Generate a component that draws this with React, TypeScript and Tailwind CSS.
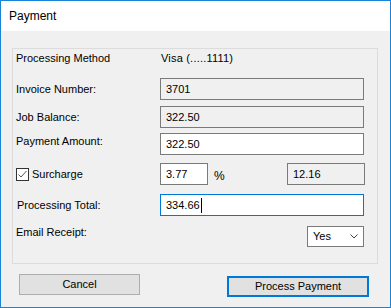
import { useState } from 'react';

const font = { fontFamily: '"Liberation Sans", Arial, sans-serif' };

function Box({ value, w, editable, focused }: { value: string; w: string; editable?: boolean; focused?: boolean }) {
  const border = focused ? 'border-[#0078d7]' : 'border-[#7a7a7a]';
  const bg = editable || focused ? 'bg-white' : 'bg-[#f0f0f0]';
  return (
    <div className={`${w} h-[22px] border ${border} ${bg} flex items-center pl-[5px] text-black`}>
      <span>{value}</span>
      {focused && <span className="w-px h-[15px] bg-black ml-[1px]" />}
    </div>
  );
}

export default function App() {
  const [surcharge, setSurcharge] = useState(true);

  return (
    <div
      className="w-[391px] h-[308px] border border-[#1883d7] bg-[#f0f0f0] flex flex-col text-[11px] text-black"
      style={font}
    >
      <div className="h-[30px] bg-white flex items-center pl-[8px] text-[12px] shrink-0">Payment</div>

      <div className="ml-[11px] mt-[17px] w-[366px] h-[216px] border border-[#dcdcdc] flex flex-col pl-[3px]">
        <div className="h-[18px] flex items-center">
          <span className="w-[144px]">Processing Method</span>
          <span className="pl-[1px] tracking-[0.2px]">Visa (.....1111)</span>
        </div>

        <div className="mt-[11px] h-[22px] flex items-center">
          <span className="w-[144px]">Invoice Number:</span>
          <Box value="3701" w="w-[204px]" />
        </div>

        <div className="mt-[6px] h-[22px] flex items-center">
          <span className="w-[144px]">Job Balance:</span>
          <Box value="322.50" w="w-[204px]" />
        </div>

        <div className="mt-[5px] h-[22px] flex items-start">
          <span className="w-[144px] leading-[13px] mt-[2px]">Payment Amount:</span>
          <Box value="322.50" w="w-[204px]" editable />
        </div>

        <div className="mt-[8px] h-[22px] flex items-center">
          <label className="w-[144px] flex items-center gap-[3px] cursor-default">
            <span
              onClick={() => setSurcharge(!surcharge)}
              className="w-[13px] h-[13px] border border-[#333333] bg-white flex items-center justify-center"
            >
              {surcharge && (
                <svg width="11" height="11" viewBox="0 0 11 11">
                  <path d="M1.5 5.5 L4 8 L9.5 2" stroke="#555555" strokeWidth="1" fill="none" />
                </svg>
              )}
            </span>
            <span>Surcharge</span>
          </label>
          <Box value="3.77" w="w-[48px]" editable />
          <span className="ml-[6px] w-[73px] pt-[3px] text-[12px]">%</span>
          <Box value="12.16" w="w-[78px]" />
        </div>

        <div className="mt-[9px] h-[22px] flex items-center">
          <span className="w-[144px] pl-[1px]">Processing Total:</span>
          <Box value="334.66" w="w-[204px]" focused />
        </div>

        <div className="mt-[10px] h-[21px] flex items-start">
          <span className="w-[291px] leading-[13px]">Email Receipt:</span>
          <div className="w-[57px] h-[21px] border border-[#7a7a7a] bg-white flex items-center justify-between pl-[5px] pr-[5px]">
            <span>Yes</span>
            <svg width="8" height="5" viewBox="0 0 8 5">
              <path d="M0.5 0.5 L4 4 L7.5 0.5" stroke="#444444" strokeWidth="1" fill="none" />
            </svg>
          </div>
        </div>
      </div>

      <div className="mt-[10px] flex items-start">
        <button className="ml-[18px] w-[121px] h-[21px] bg-[#e1e1e1] border border-[#adadad] text-[11px] flex items-center justify-center">
          Cancel
        </button>
        <button className="ml-[87px] mt-[2px] w-[142px] h-[21px] bg-[#e1e1e1] border-2 border-[#0078d7] text-[11px] flex items-center justify-center">
          Process Payment
        </button>
      </div>
    </div>
  );
}
